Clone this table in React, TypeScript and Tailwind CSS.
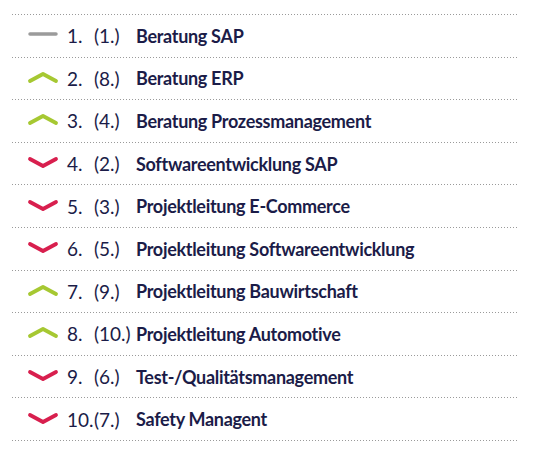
type Trend = "same" | "up" | "down";

interface Row {
  rank: string;
  prev: string;
  label: string;
  trend: Trend;
}

const rows: Row[] = [
  { rank: "1.", prev: "(1.)", label: "Beratung SAP", trend: "same" },
  { rank: "2.", prev: "(8.)", label: "Beratung ERP", trend: "up" },
  { rank: "3.", prev: "(4.)", label: "Beratung Prozessmanagement", trend: "up" },
  { rank: "4.", prev: "(2.)", label: "Softwareentwicklung SAP", trend: "down" },
  { rank: "5.", prev: "(3.)", label: "Projektleitung E-Commerce", trend: "down" },
  { rank: "6.", prev: "(5.)", label: "Projektleitung Softwareentwicklung", trend: "down" },
  { rank: "7.", prev: "(9.)", label: "Projektleitung Bauwirtschaft", trend: "up" },
  { rank: "8.", prev: "(10.)", label: "Projektleitung Automotive", trend: "up" },
  { rank: "9.", prev: "(6.)", label: "Test-/Qualitätsmanagement", trend: "down" },
  { rank: "10.", prev: "(7.)", label: "Safety Managent", trend: "down" },
];

function TrendIcon({ trend }: { trend: Trend }) {
  if (trend === "same") {
    return (
      <svg width="32" height="14" viewBox="0 0 32 14" className="shrink-0">
        <line x1="3" y1="7" x2="29" y2="7" stroke="#9b9b9b" strokeWidth="3.5" strokeLinecap="round" />
      </svg>
    );
  }
  const up = trend === "up";
  return (
    <svg width="32" height="14" viewBox="0 0 32 14" className="shrink-0">
      <polyline
        points={up ? "3,11 16,4 29,11" : "3,4 16,11 29,4"}
        fill="none"
        stroke={up ? "#a6c832" : "#d81f4e"}
        strokeWidth="3.8"
        strokeLinecap="round"
        strokeLinejoin="round"
      />
    </svg>
  );
}

function Dots() {
  return <div className="h-px w-[507px] bg-[linear-gradient(to_right,#9a9a9a_1px,transparent_1px)] bg-[length:3px_1px]" />;
}

export default function App() {
  return (
    <div className="h-[458px] w-[540px] bg-white pl-[12px] pt-[14px] font-['Lato',sans-serif] text-[#1b1c48]">
      <Dots />
      {rows.map((r) => (
        <div key={r.rank}>
          <div className="flex h-[41.6px] items-center">
            <div className="ml-[15px] w-[40px] -mt-[3px]">
              <TrendIcon trend={r.trend} />
            </div>
            <span className="w-[27px] text-[19px] font-normal leading-none">{r.rank}</span>
            <span className="w-[42px] text-[19px] font-normal leading-none">{r.prev}</span>
            <span className="text-[18px] font-bold leading-none tracking-[-0.3px]">{r.label}</span>
          </div>
          <Dots />
        </div>
      ))}
    </div>
  );
}
